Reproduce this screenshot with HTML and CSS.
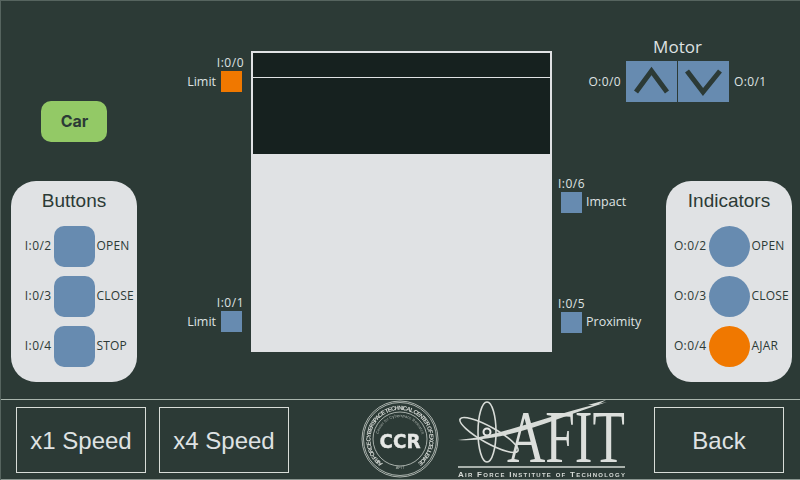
FILE: index.html
```html
<!DOCTYPE html>
<html lang="en">
<head>
    <meta charset="UTF-8">
    <meta name="viewport" content="width=device-width, initial-scale=1.0">
    <title>Garage Door Trainer</title>
    <link rel="stylesheet" href="styles.css">
</head>
<body>
    <div class="page">
        <div class="stage">
            <div class="left-col">
                <button class="car">Car</button>
                <div class="panel">
                    <div class="panel-title">Buttons</div>
                    <div class="panel-row">
                        <span class="tag">I:0/2</span><button class="push"></button><span class="name">OPEN</span>
                    </div>
                    <div class="panel-row">
                        <span class="tag">I:0/3</span><button class="push"></button><span class="name">CLOSE</span>
                    </div>
                    <div class="panel-row">
                        <span class="tag">I:0/4</span><button class="push"></button><span class="name">STOP</span>
                    </div>
                </div>
            </div>

            <div class="limit-col">
                <div class="sensor">
                    <div class="sensor-tag">I:0/0</div>
                    <div class="sensor-row"><span>Limit</span><div class="square on"></div></div>
                </div>
                <div class="sensor">
                    <div class="sensor-tag">I:0/1</div>
                    <div class="sensor-row"><span>Limit</span><div class="square"></div></div>
                </div>
            </div>

            <div class="door">
                <div class="door-open">
                    <div class="door-top"></div>
                </div>
            </div>

            <div class="right-col">
                <div class="motor">
                    <div class="motor-title">Motor</div>
                    <span class="motor-tag left">O:0/0</span>
                    <div class="motor-btns">
                        <button class="motor-btn">
                            <svg width="51" height="41" viewBox="0 0 51 41"><path d="M10 31 L25.5 10 L41 31" /></svg>
                        </button>
                        <button class="motor-btn">
                            <svg width="51" height="41" viewBox="0 0 51 41"><path d="M9 10 L25 31 L42 10" /></svg>
                        </button>
                    </div>
                    <span class="motor-tag">O:0/1</span>
                </div>

                <div class="lower">
                    <div class="side-sensors">
                        <div class="sensor">
                            <div class="side-tag">I:0/6</div>
                            <div class="side-row"><div class="square"></div><span>Impact</span></div>
                        </div>
                        <div class="sensor">
                            <div class="side-tag">I:0/5</div>
                            <div class="side-row"><div class="square"></div><span>Proximity</span></div>
                        </div>
                    </div>
                    <div class="panel">
                        <div class="panel-title">Indicators</div>
                        <div class="panel-row">
                            <span class="tag">O:0/2</span><div class="lamp"></div><span class="name">OPEN</span>
                        </div>
                        <div class="panel-row">
                            <span class="tag">O:0/3</span><div class="lamp"></div><span class="name">CLOSE</span>
                        </div>
                        <div class="panel-row">
                            <span class="tag">O:0/4</span><div class="lamp on"></div><span class="name">AJAR</span>
                        </div>
                    </div>
                </div>
            </div>
        </div>

        <div class="footer">
            <button class="foot-btn">x1 Speed</button>
            <button class="foot-btn">x4 Speed</button>
            <svg class="logos" width="280" height="80" viewBox="352 400 280 80">
                <defs>
                    <path id="ring-outer" d="M383 464.500 A29.500 29.500 0 1 1 417 464.500" />
                    <path id="ring-inner" d="M378 440 A22 22 0 0 1 422 440" />
                </defs>
                <g class="ccr">
                    <circle cx="400" cy="440" r="38" />
                    <circle cx="400" cy="440" r="36.500" />
                    <circle cx="400" cy="440" r="27" />
                    <text class="ring-text"><textPath href="#ring-outer" textLength="148">AIR FORCE CYBERSPACE TECHNICAL CENTER OF EXCELLENCE</textPath></text>
                    <text class="ring-small"><textPath href="#ring-inner" startOffset="5" textLength="59">Center for Cyberspace Research</textPath></text>
                    <text class="ring-small" x="400" y="470" text-anchor="middle">AFIT</text>
                    <text class="ccr-text" x="400" y="449" text-anchor="middle" textLength="41" lengthAdjust="spacingAndGlyphs">CCR</text>
                </g>
                <g class="afit">
                    <ellipse cx="487" cy="433" rx="9" ry="30" />
                    <ellipse cx="489" cy="436" rx="33" ry="8" transform="rotate(29 489 436)" />
                    <circle class="nucleus" cx="487" cy="433" r="3.500" />
                    <path class="swoosh" d="M458 441 C500 438 560 412 607 403 C560 418 505 444 458 441 Z" />
                    <path class="swoosh" d="M588 406 L606 401 L597 406 Z" />
                    <text class="afit-text" transform="translate(507 463) scale(1 1.28)" textLength="118" lengthAdjust="spacingAndGlyphs">AFIT</text>
                    <rect class="rule" x="458" y="467" width="167" height="2" />
                    <text class="afit-caption" x="458" y="478" textLength="167" lengthAdjust="spacing">Air Force Institute of Technology</text>
                </g>
            </svg>
            <button class="foot-btn back">Back</button>
        </div>
    </div>
</body>
</html>
```

FILE: styles.css
```css
body {
    margin: 0;
    background-color: #2c3a36;
}

.page {
    width: 800px;
    height: 480px;
    overflow: hidden;
    background-color: #2c3a36;
    box-shadow: inset 1px 1px 0 #56645f, inset 0 -1px 0 #8a9590;
    font-family: "Open Sans", sans-serif;
    color: #dfe2e3;
}

button {
    font-family: inherit;
    padding: 0;
    border: none;
    cursor: pointer;
}

.stage {
    display: flex;
    height: 399px;
}

.left-col {
    width: 186px;
    padding: 101px 0 0 11px;
    box-sizing: border-box;
}

.car {
    display: block;
    width: 66px;
    height: 41px;
    margin: 0 0 39px 30px;
    padding: 0 0 2px 1px;
    background-color: #93c966;
    border-radius: 10px;
    color: #2c3a36;
    font-family: Inter, sans-serif;
    font-size: 16px;
    font-weight: 700;
}

.panel {
    width: 126px;
    height: 201px;
    box-sizing: border-box;
    padding-top: 10px;
    background-color: #e0e2e4;
    border-radius: 25px;
    color: #2c3a36;
}

.panel-title {
    height: 35px;
    line-height: 20px;
    font-family: "Liberation Sans", sans-serif;
    font-size: 19px;
    text-align: center;
}

.panel-row {
    display: grid;
    grid-template-columns: 1fr 41px 1fr;
    column-gap: 2px;
    align-items: center;
    height: 41px;
    margin-bottom: 9px;
    font-size: 12px;
}

.tag {
    margin-bottom: 2px;
    text-align: right;
    white-space: nowrap;
    letter-spacing: 0.4px;
}

.name {
    margin-bottom: 2px;
    white-space: nowrap;
    letter-spacing: 0.2px;
}

.push {
    width: 41px;
    height: 41px;
    background-color: #678bb0;
    border-radius: 10px;
}

.lamp {
    width: 41px;
    height: 41px;
    background-color: #678bb0;
    border-radius: 50%;
}

.lamp.on {
    background-color: #f07800;
}

.limit-col {
    width: 58px;
    margin-right: 7px;
    padding-top: 55px;
    box-sizing: border-box;
    display: flex;
    flex-direction: column;
    gap: 203px;
}

.sensor {
    font-size: 12px;
}

.sensor-tag {
    height: 16px;
    line-height: 16px;
    text-align: right;
    letter-spacing: 0.5px;
}

.sensor-row {
    display: flex;
    justify-content: flex-end;
    align-items: center;
    gap: 5px;
    padding-right: 2px;
    font-size: 12.5px;
}

.square {
    flex-shrink: 0;
    width: 21px;
    height: 21px;
    background-color: #678bb0;
}

.square.on {
    background-color: #f07800;
}

.door {
    width: 301px;
    height: 301px;
    margin-top: 51px;
    box-sizing: border-box;
    border: 2px solid #e0e2e4;
    background-color: #e0e2e4;
}

.door-open {
    height: 101px;
    background-color: #16211f;
}

.door-top {
    height: 24px;
    border-bottom: 1px solid #e0e2e4;
}

.right-col {
    flex: 1;
    padding-left: 5px;
}

.motor {
    display: grid;
    grid-template-columns: 69px 103px auto;
    grid-template-rows: 24px 41px;
    align-items: center;
    padding-top: 37px;
    font-size: 12px;
    letter-spacing: 0.4px;
}

.motor-title {
    grid-column: 2;
    height: 24px;
    line-height: 20px;
    font-size: 17px;
    letter-spacing: 0;
    text-align: center;
}

.motor-tag {
    grid-row: 2;
    padding-left: 5px;
}

.motor-tag.left {
    grid-column: 1;
    padding: 0 5px 0 0;
    text-align: right;
}

.motor-btns {
    grid-row: 2;
    grid-column: 2;
    display: flex;
    gap: 1px;
}

.motor-btn {
    display: block;
    width: 51px;
    height: 41px;
    background-color: #678bb0;
}

.motor-btn svg {
    display: block;
}

.motor-btn path {
    fill: none;
    stroke: #2c3a36;
    stroke-width: 5;
}

.lower {
    display: flex;
    justify-content: space-between;
    align-items: flex-start;
    padding-right: 8px;
    margin-top: 79px;
}

.side-sensors {
    display: flex;
    flex-direction: column;
    gap: 83px;
    margin: -5px 0 0 1px;
}

.side-tag {
    height: 16px;
    line-height: 16px;
    letter-spacing: 0.5px;
}

.side-row {
    display: flex;
    align-items: center;
    gap: 4px;
    padding-left: 3px;
    font-size: 12.5px;
}

.side-row span {
    margin-bottom: 2px;
}

.footer {
    display: flex;
    align-items: flex-start;
    gap: 13px;
    height: 80px;
    box-sizing: border-box;
    margin-left: 1px;
    padding: 7px 16px 0 15px;
    border-top: 1px solid #a9b5ad;
}

.foot-btn {
    width: 130px;
    height: 66px;
    padding-top: 2px;
    background: transparent;
    border: 1px solid #d8dcd8;
    color: #dfe2e3;
    font-family: "Liberation Sans", sans-serif;
    font-size: 24px;
}

.back {
    margin-left: auto;
}

.logos {
    margin: -8px 0 0 50px;
    filter: blur(0.4px);
}

.ccr circle {
    fill: none;
    stroke: #c9cfca;
    stroke-width: 0.8;
}

.ring-text {
    fill: #d4d8d4;
    font-family: "Liberation Sans", sans-serif;
    font-size: 6px;
    font-weight: 700;
}

.ring-small {
    fill: #a9b1ac;
    font-family: "Liberation Sans", sans-serif;
    font-size: 4px;
}

.ccr-text {
    fill: #e6e8e6;
    stroke: #e6e8e6;
    stroke-width: 0.4;
    font-family: "DejaVu Sans", sans-serif;
    font-size: 20px;
    font-weight: 700;
}

.afit ellipse {
    fill: none;
    stroke: #d8dcd8;
    stroke-width: 1.6;
}

.nucleus {
    fill: none;
    stroke: #e6e8e6;
    stroke-width: 2;
}

.swoosh {
    fill: #d8dcd8;
}

.afit-text {
    fill: #dcdfdc;
    font-family: "Liberation Serif", serif;
    font-size: 58px;
}

.rule {
    fill: #a9b1ac;
}

.afit-caption {
    fill: #d8dcd8;
    font-family: "Liberation Sans", sans-serif;
    font-size: 8px;
    font-weight: 700;
    font-variant: small-caps;
}
```
